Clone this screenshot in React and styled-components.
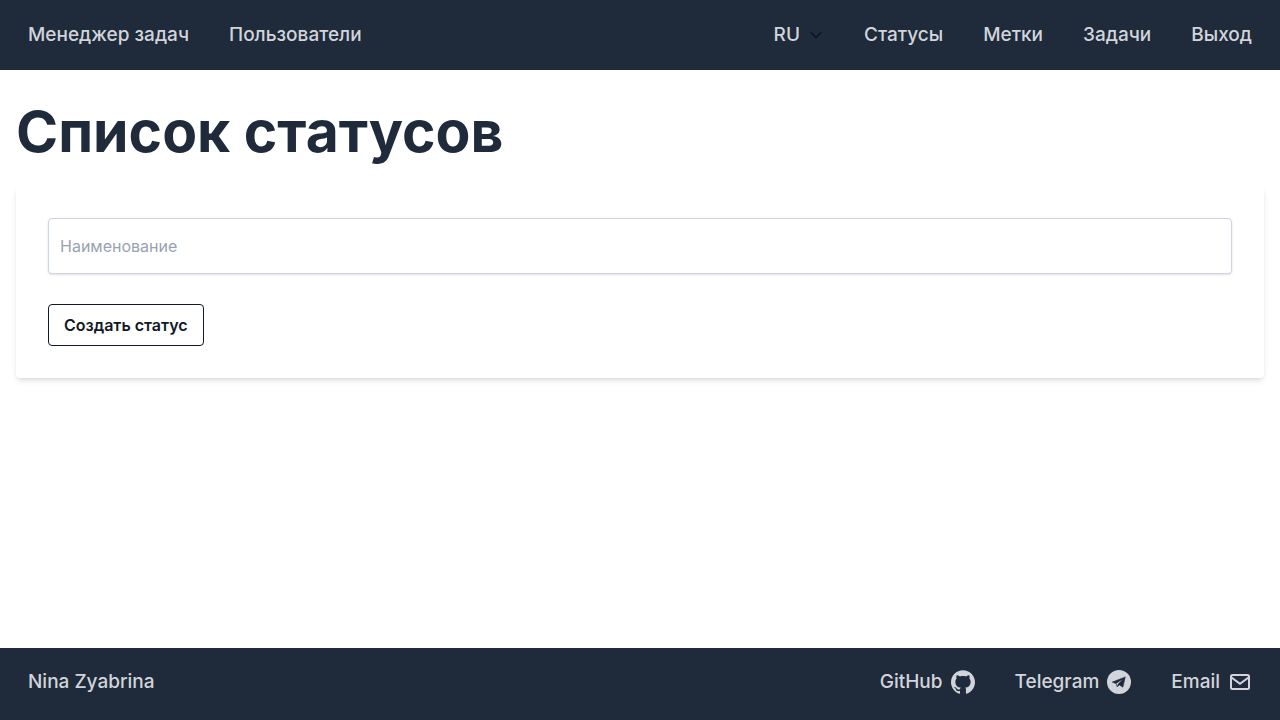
import React from "react";
import styled, { createGlobalStyle } from "styled-components";
import { SiGithub } from "react-icons/si";

const GlobalStyle = createGlobalStyle`
  *, *::before, *::after { box-sizing: border-box; }
  body {
    margin: 0;
    background: #fff;
    color: #111827;
    font-family: Inter, "Liberation Sans", sans-serif;
    font-size: 16px;
    line-height: 24px;
  }
`;

const Page = styled.div`
  display: flex;
  flex-direction: column;
  min-height: 100vh;
`;

const Bar = styled.div`
  display: flex;
  align-items: center;
  justify-content: space-between;
  padding: 20px 28px ${(p) => p.$bottom};
  min-height: ${(p) => p.$height};
  background: #1f2a3a;
  color: #d1d5db;
  font-size: 19px;
  font-weight: 500;
  line-height: 28px;
`;

const Group = styled.nav`
  display: flex;
  align-items: center;
  gap: 40px;
`;

const BarLink = styled.a`
  display: inline-flex;
  align-items: center;
  gap: 8px;
  color: inherit;
  text-decoration: none;
`;

const LanguageButton = styled.button`
  display: inline-flex;
  align-items: center;
  gap: 8px;
  padding: 0;
  border: 0;
  background: none;
  color: inherit;
  font: inherit;
  cursor: pointer;
`;

const Chevron = styled.svg`
  width: 16px;
  height: 16px;
  color: #0b1220;
`;

const Main = styled.main`
  flex: 1;
  padding: 32px 16px;
`;

const Title = styled.h1`
  margin: 0 0 24px;
  color: #1f2a3a;
  font-size: 57px;
  font-weight: 700;
  line-height: 60px;
`;

const Form = styled.form`
  display: flex;
  flex-direction: column;
  align-items: flex-start;
  gap: 30px;
  padding: 32px;
  border-radius: 4px;
  background: #fff;
  box-shadow: 0 4px 6px -1px rgba(0, 0, 0, 0.1), 0 2px 4px -2px rgba(0, 0, 0, 0.1);
`;

const TextInput = styled.input`
  width: 100%;
  height: 56px;
  padding: 0 11px;
  border: 1px solid #cdd5e0;
  border-radius: 4px;
  background: #fff;
  color: inherit;
  font: inherit;
  box-shadow: 0 1px 3px 0 rgba(0, 0, 0, 0.1), 0 1px 2px -1px rgba(0, 0, 0, 0.1);

  &::placeholder { color: #98a2b0; opacity: 1; }
`;

const SubmitButton = styled.button`
  padding: 8px 15px;
  border: 1px solid #111827;
  border-radius: 4px;
  background: #fff;
  color: #111827;
  font: inherit;
  font-weight: 600;
  cursor: pointer;
`;

const TelegramIcon = () => (
  <svg width="24" height="24" viewBox="0 0 24 24" fill="none" aria-hidden="true">
    <circle cx="12" cy="12" r="12" fill="currentColor" />
    <path d="M5.200 12.100 18.300 6.900 15.900 17.200 12.300 14.900 10.200 17 9.200 13.700z" fill="#1f2a3a" stroke="#1f2a3a" strokeWidth="0.500" strokeLinejoin="round" />
    <path d="M9.400 13.600 15.400 9.400 10.700 14.200 10.300 16.200z" fill="currentColor" />
  </svg>
);

const MailIcon = () => (
  <svg width="24" height="24" viewBox="0 0 24 24" fill="none" stroke="currentColor" strokeWidth="2" aria-hidden="true">
    <rect x="3" y="5" width="18" height="14" rx="1.500" />
    <path d="M3.500 7.500 12 13.700l8.500-6.200" />
  </svg>
);

export default function App() {
  return (
    <Page>
      <GlobalStyle />
      <Bar as="header" $height="70px" $bottom="20px">
        <Group>
          <BarLink href="#home">Менеджер задач</BarLink>
          <BarLink href="#users">Пользователи</BarLink>
        </Group>
        <Group>
          <LanguageButton type="button">
            RU
            <Chevron viewBox="0 0 16 16" fill="none" stroke="currentColor" strokeWidth="1.4" aria-hidden="true">
              <path d="M3 5.500l5 5 5-5" />
            </Chevron>
          </LanguageButton>
          <BarLink href="#statuses">Статусы</BarLink>
          <BarLink href="#labels">Метки</BarLink>
          <BarLink href="#tasks">Задачи</BarLink>
          <BarLink href="#logout">Выход</BarLink>
        </Group>
      </Bar>
      <Main>
        <Title>Список статусов</Title>
        <Form>
          <TextInput type="text" aria-label="Наименование" placeholder="Наименование" />
          <SubmitButton type="submit">Создать статус</SubmitButton>
        </Form>
      </Main>
      <Bar as="footer" $height="72px" $bottom="24px">
        <span>Nina Zyabrina</span>
        <Group>
          <BarLink href="#github">GitHub <SiGithub size={24} /></BarLink>
          <BarLink href="#telegram">Telegram <TelegramIcon /></BarLink>
          <BarLink href="#email">Email <MailIcon /></BarLink>
        </Group>
      </Bar>
    </Page>
  );
}
